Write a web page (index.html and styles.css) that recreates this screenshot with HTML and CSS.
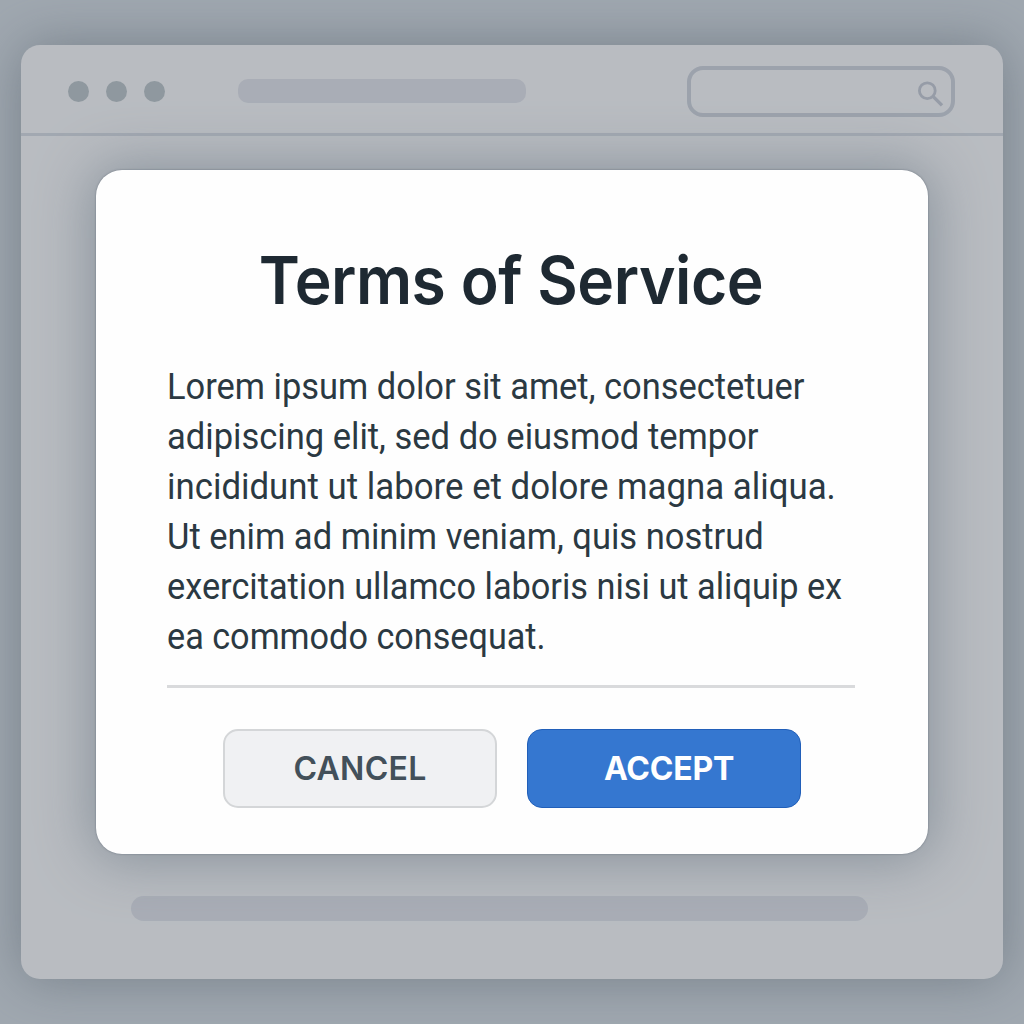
FILE: index.html
```html
<!DOCTYPE html>
<html lang="en">

<head>
    <meta charset="UTF-8" />
    <title>Terms of Service</title>
    <link rel="stylesheet" href="styles.css">
</head>

<body>
    <div class="window">
        <div class="toolbar">
            <div class="dots">
                <span class="dot"></span>
                <span class="dot"></span>
                <span class="dot"></span>
            </div>
            <div class="title-bar"></div>
            <div class="search">
                <svg class="search-icon" width="28" height="28" viewBox="0 0 28 28" fill="none">
                    <circle cx="11.3" cy="11.7" r="7.9" stroke-width="2.8" />
                    <path d="M17 17.4L26 26.4" stroke-width="3.4" />
                </svg>
            </div>
        </div>
        <div class="content">
            <div class="content-bar"></div>
        </div>
    </div>

    <div class="overlay">
        <div class="modal">
            <h1>Terms of Service</h1>
            <p>
                <span class="line line-1">Lorem ipsum dolor sit amet, consectetuer</span>
                <span class="line line-2">adipiscing elit, sed do eiusmod tempor</span>
                <span class="line line-3">incididunt ut labore et dolore magna aliqua.</span>
                <span class="line line-4">Ut enim ad minim veniam, quis nostrud</span>
                <span class="line line-5">exercitation ullamco laboris nisi ut aliquip ex</span>
                <span class="line line-6">ea commodo consequat.</span>
            </p>
            <div class="actions">
                <button type="button" class="btn cancel">CANCEL</button>
                <button type="button" class="btn accept">ACCEPT</button>
            </div>
        </div>
    </div>
</body>

</html>
```
FILE: styles.css
```css
* {
    box-sizing: border-box;
}

body {
    font-family: Roboto, "Liberation Sans", sans-serif;
    background: #a0a8b0;
    margin: 0;
    height: 100vh;
    padding: 45px 21px;
    overflow: hidden;
}

.window {
    height: 100%;
    display: flex;
    flex-direction: column;
    background: #b9bcc1;
    border-radius: 19px;
    box-shadow: 0 0 54px rgba(116, 125, 136, 0.95);
}

.toolbar {
    height: 91px;
    display: flex;
    align-items: center;
    padding: 4px 48px 0 47px;
    border-bottom: 3px solid #a2a8b1;
}

.dots {
    display: flex;
    gap: 17px;
}

.dot {
    width: 21px;
    height: 21px;
    border-radius: 50%;
    background: #8f989f;
}

.title-bar {
    width: 288px;
    height: 24px;
    margin-left: 73px;
    border-radius: 10px;
    background: #a9adb6;
}

.search {
    width: 268px;
    height: 51px;
    margin-left: auto;
    display: flex;
    align-items: center;
    justify-content: flex-end;
    padding: 4px 7px 0 0;
    border: 4px solid #9ca2ac;
    border-radius: 16px;
}

.search-icon {
    stroke: #969ca7;
}

.content {
    flex: 1;
    display: flex;
    align-items: flex-end;
    padding: 0 135px 58px 110px;
}

.content-bar {
    flex: 1;
    height: 25px;
    border-radius: 13px;
    background: #a9adb6;
}

.overlay {
    position: absolute;
    inset: 0;
    padding: 170px 96px;
}

.modal {
    height: 684px;
    padding: 70px 73px 0 71px;
    background: #fefefe;
    border-radius: 26px;
    box-shadow: 0 0 2px rgba(80, 90, 102, 0.7), 0 1px 54px 5px rgba(134, 144, 154, 0.95);
}

h1 {
    margin: 0 0 42px;
    font-family: Inter, Roboto, sans-serif;
    font-size: 66px;
    line-height: 80px;
    font-weight: 600;
    letter-spacing: -0.5px;
    white-space: nowrap;
    text-align: center;
    color: #1e2932;
    transform: scaleX(0.945);
}

p {
    margin: 0;
    padding-bottom: 23px;
    font-size: 36px;
    line-height: 50px;
    white-space: nowrap;
    color: #2b3942;
    border-bottom: 3px solid #d9dadc;
}

.line {
    display: block;
    transform-origin: left;
}

.line-1 {
    transform: scaleX(0.957);
}

.line-2 {
    transform: scaleX(0.959);
}

.line-3 {
    transform: scaleX(0.967);
}

.line-4 {
    transform: scaleX(0.959);
}

.line-5 {
    transform: scaleX(0.953);
}

.line-6 {
    transform: scaleX(0.95);
}

.actions {
    display: flex;
    justify-content: center;
    gap: 30px;
    margin-top: 41px;
    padding-left: 2px;
}

.btn {
    width: 274px;
    height: 79px;
    border-radius: 15px;
    font-family: Inter, Roboto, sans-serif;
    font-size: 32px;
    cursor: pointer;
}

.cancel {
    background: #f0f1f3;
    border: 2px solid #d4d6d8;
    color: #43505a;
    font-weight: 600;
    letter-spacing: 0.3px;
}

.accept {
    background: #3577d0;
    border: 1px solid #215fb9;
    color: #fff;
    font-weight: 700;
    padding-left: 16px;
    letter-spacing: -0.2px;
}
```
